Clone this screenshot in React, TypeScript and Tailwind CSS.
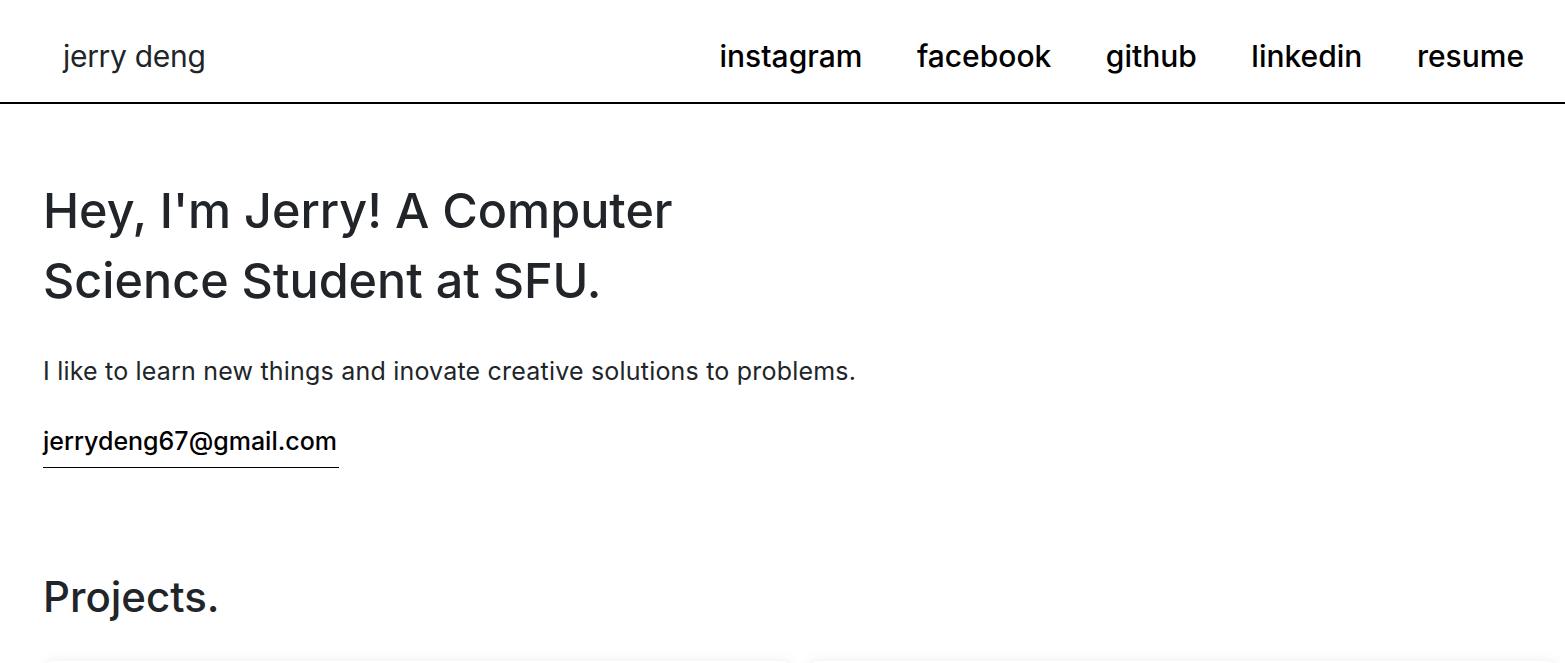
export default function App() {
  const font = { fontFamily: '"Inter", "Noto Sans", sans-serif' };
  return (
    <div className="min-h-screen bg-white overflow-hidden h-[663px]" style={font}>
      <header className="h-[104px] border-b-2 border-black flex items-center justify-between pl-[63px] pr-[41px]">
        <div className="text-[30px] text-[#212529] tracking-[-0.3px] pt-[10px]">jerry deng</div>
        <nav className="flex gap-[54.5px] text-[30px] font-medium text-black pt-[10px]">
          <a>instagram</a>
          <a>facebook</a>
          <a>github</a>
          <a>linkedin</a>
          <a>resume</a>
        </nav>
      </header>
      <main className="pl-[43px] pt-[72px]">
        <h1 className="text-[48.5px] leading-[70px] font-medium text-[#212529] w-[700px]">
          Hey, I'm Jerry! A Computer Science Student at SFU.
        </h1>
        <p className="mt-[37px] text-[25px] tracking-[0.2px] text-[#212529]">
          I like to learn new things and inovate creative solutions to problems.
        </p>
        <div className="mt-[32px]">
          <a className="inline-block text-[25px] font-medium text-black border-b border-black pb-[7px] pr-[2px]">
            jerrydeng67@gmail.com
          </a>
        </div>
        <h2 className="mt-[97px] text-[42px] font-medium text-[#212529]">Projects.</h2>
        <div className="mt-[33px] grid grid-cols-2 gap-[20px] ml-[2px] w-[1510px]">
          <div className="h-[200px] rounded-t-lg bg-white shadow-[0_0_12px_rgba(100,110,160,0.12)]" />
          <div className="h-[200px] rounded-t-lg bg-white shadow-[0_0_12px_rgba(100,110,160,0.12)]" />
        </div>
      </main>
    </div>
  );
}
